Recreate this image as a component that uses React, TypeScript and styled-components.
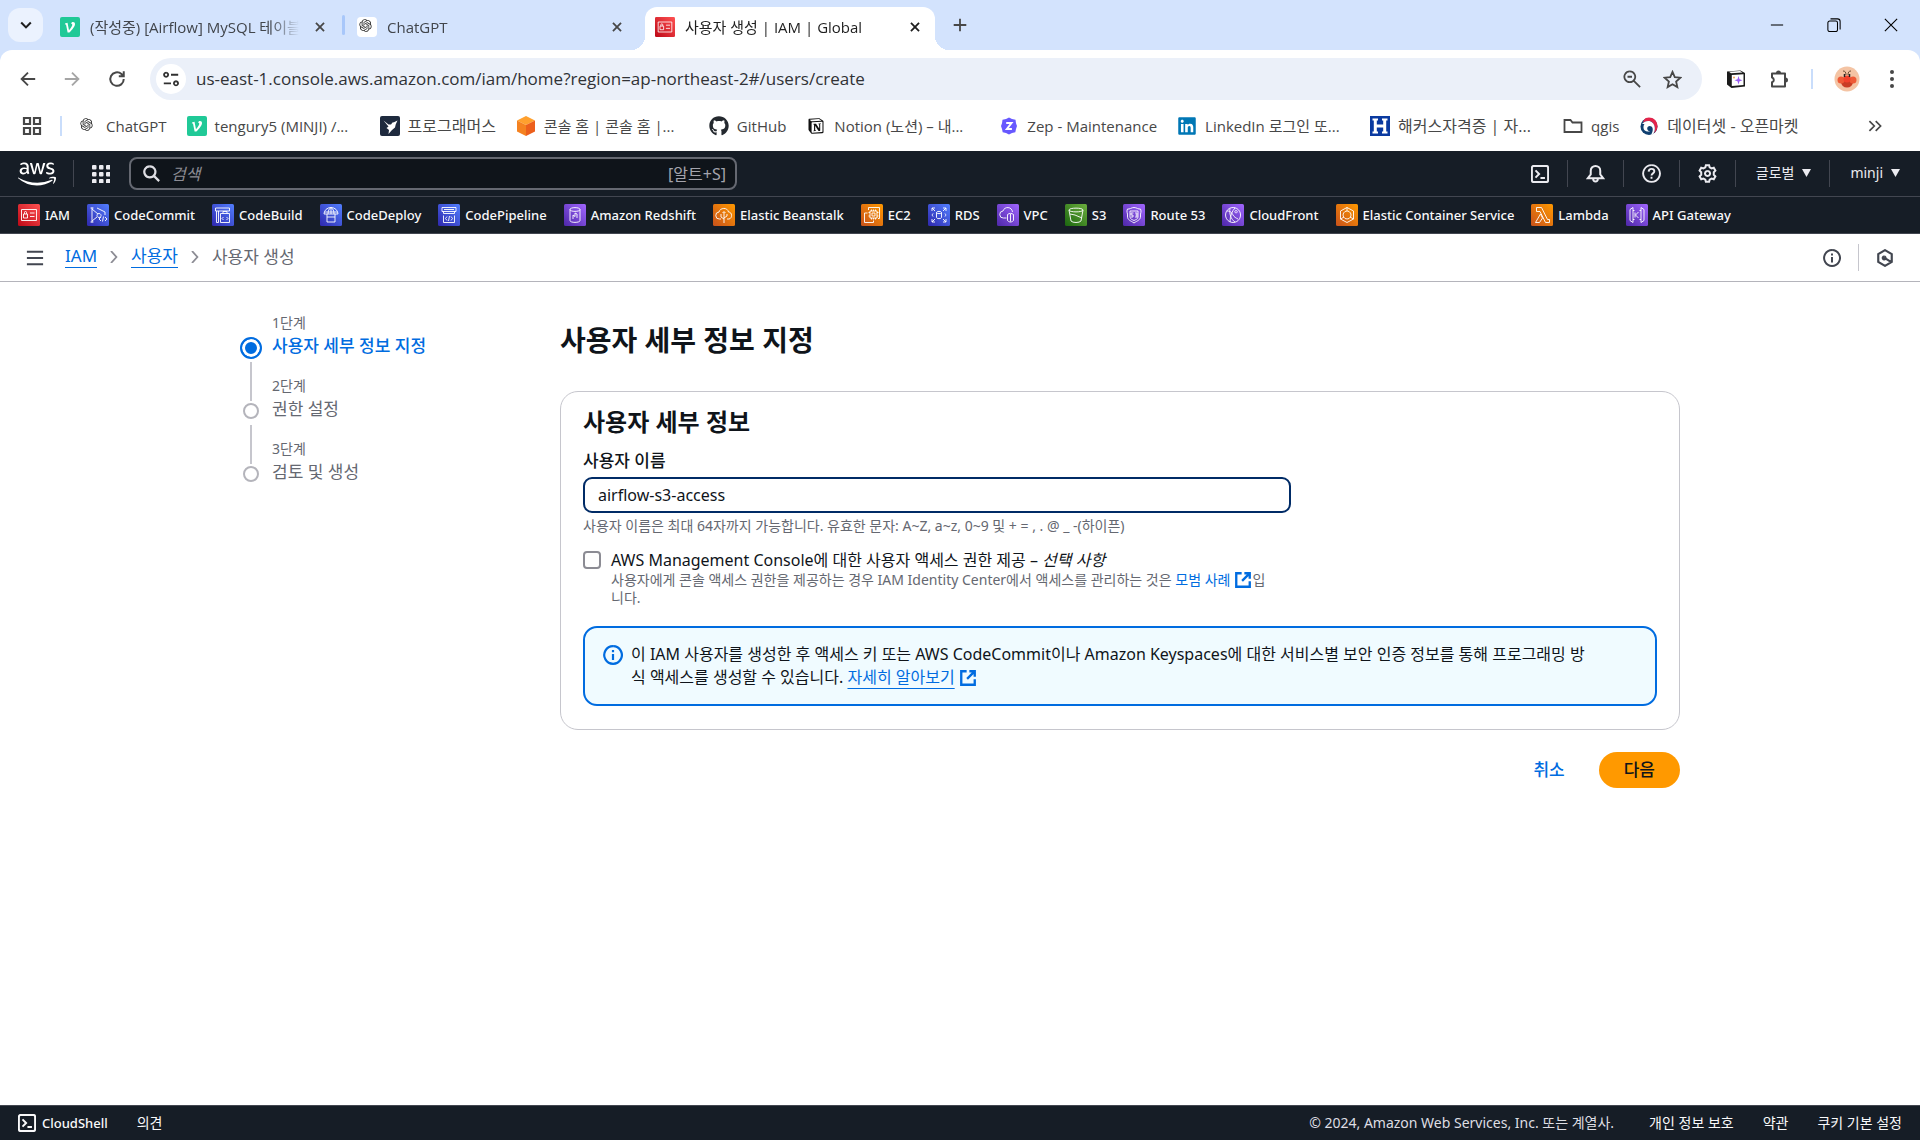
import React from "react";
import styled, { createGlobalStyle, css } from "styled-components";
import { FaAws, FaGithub, FaLinkedin } from "react-icons/fa";
import { RiOpenaiFill, RiNotionFill } from "react-icons/ri";

const ui = `"Open Sans", "Noto Sans CJK KR", sans-serif`;
const ember = `"Noto Sans", "Noto Sans CJK KR", sans-serif`;

const GlobalStyle = createGlobalStyle`
  * { box-sizing: border-box; }
  body { margin: 0; background: #fff; font-family: ${ember}; color: #0f141a; }
  button { border: 0; padding: 0; background: none; font: inherit; color: inherit; cursor: pointer; }
  button, a { display: inline-flex; align-items: center; }
  svg { display: block; flex: none; }
  h1, h2, p, ol, ul { margin: 0; padding: 0; }
  ol, ul { list-style: none; }
`;

const Page = styled.div`
  min-height: 100vh;
  display: flex;
  flex-direction: column;
`;

/* ---------- browser window ---------- */

const TabStrip = styled.div`
  height: 50px;
  display: flex;
  align-items: flex-end;
  background: #d3e3fd;
  font: 15px/20px ${ui};
`;
const TabSearch = styled.button`
  width: 35px;
  height: 34px;
  margin: 0 4px 8px 8px;
  justify-content: center;
  border-radius: 12px;
  background: #ebf2fe;
`;
const Tab = styled.div<{ $active?: boolean }>`
  position: relative;
  display: flex;
  align-items: center;
  width: 297px;
  height: 43px;
  padding: 0 15px 4px 13px;
  color: ${(p) => (p.$active ? "#1f1f1f" : "#41454b")};
  ${(p) =>
    p.$active &&
    css`
      width: 290px;
      margin-left: 4px;
      padding: 0 11px 4px 10px;
      background: #fff;
      border-radius: 12px 12px 0 0;
      &::before,
      &::after {
        content: "";
        position: absolute;
        bottom: 0;
        width: 14px;
        height: 14px;
      }
      &::before {
        left: -14px;
        background: radial-gradient(circle at 0 0, transparent 14px, #fff 14px);
      }
      &::after {
        right: -14px;
        background: radial-gradient(circle at 100% 0, transparent 14px, #fff 14px);
      }
    `}
`;
const TabTitle = styled.span`
  flex: 1;
  margin: 0 12px 0 10px;
  overflow: hidden;
  white-space: nowrap;
  mask-image: linear-gradient(90deg, #000 86%, transparent);
`;
const TabDivider = styled.span`
  width: 3px;
  height: 20px;
  margin: 0 -1px 15px -2px;
  border-radius: 2px;
  background: #a8c7fa;
`;
const NewTab = styled.button`
  margin: 0 auto 16px 16px;
`;
const WindowControls = styled.div`
  display: flex;
  align-items: center;
  gap: 43px;
  margin: 0 22px 18px 0;
`;

const BrowserBar = styled.div`
  background: #d3e3fd;
`;
const Toolbar = styled.div`
  height: 58px;
  display: flex;
  align-items: center;
  padding: 0 17px 0 20px;
  border-radius: 12px 12px 0 0;
  background: #fff;
  color: #474747;
`;
const NavButtons = styled.div`
  display: flex;
  gap: 28px;
  margin-right: 24px;
`;
const Omnibox = styled.div`
  flex: 1;
  height: 42px;
  display: flex;
  align-items: center;
  gap: 22px;
  padding: 0 20px 0 6px;
  border-radius: 21px;
  background: #ebf0f9;
`;
const SiteInfo = styled.button`
  width: 30px;
  height: 30px;
  justify-content: center;
  border-radius: 15px;
  background: #fff;
`;
const UrlInput = styled.input`
  flex: 1;
  min-width: 0;
  margin-left: -12px;
  padding: 0;
  border: 0;
  outline: 0;
  background: none;
  font: 17px/24px ${ui};
  color: #303236;
`;
const Extensions = styled.div`
  display: flex;
  align-items: center;
  gap: 21px;
  margin-left: 23px;
`;
const Divider = styled.span<{ $inset?: boolean }>`
  width: 2px;
  height: 20px;
  margin-left: ${(p) => (p.$inset ? "18px" : "0")};
  background: #c9ddfb;
`;

const Bookmarks = styled.nav`
  height: 43px;
  display: flex;
  align-items: center;
  padding: 0 38px 8px 22px;
  color: #474747;
  font: 15px/20px ${ui};
`;
const BookmarkList = styled.div`
  flex: 1;
  display: flex;
  gap: 20px;
  margin-left: 16px;
`;
const Bookmark = styled.a`
  gap: 8px;
  color: inherit;
  text-decoration: none;
  white-space: nowrap;
`;
const BookmarkLabel = styled.span<{ $clipped?: boolean; $hangul?: boolean }>`
  width: ${(p) => (p.$clipped ? "145px" : "auto")};
  font-size: ${(p) => (p.$hangul ? 16 : 15)}px;
`;

/* ---------- AWS header ---------- */

const ConsoleHeader = styled.header`
  height: 46px;
  display: flex;
  align-items: center;
  padding: 0 20px 0 18px;
  background: #161d26;
  border-bottom: 1px solid #424650;
  color: #ebebf0;
  font-size: 14px;
`;
const Rule = styled.span<{ $light?: boolean }>`
  width: 1px;
  height: 27px;
  background: ${(p) => (p.$light ? "#c6c6cd" : "#424650")};
`;
const LogoLink = styled.a`
  margin-right: 17px;
  color: #fff;
`;
const AppsButton = styled.button`
  margin: 0 19px 0 18px;
`;
const SearchBox = styled.label`
  width: 608px;
  height: 33px;
  display: flex;
  align-items: center;
  gap: 11px;
  padding: 0 9px 0 12px;
  border: 2px solid #656871;
  border-radius: 8px;
  background: #0f141a;
  color: #a4a4ad;
  font-size: 16px;
  line-height: 22px;
`;
const SearchInput = styled.input`
  flex: 1;
  min-width: 0;
  padding: 0;
  border: 0;
  outline: 0;
  background: none;
  color: #fff;
  font: 16px/22px ${ember};
  &::placeholder {
    color: #8c8c94;
    font-style: italic;
    opacity: 1;
  }
`;
const HeaderTools = styled.div`
  display: flex;
  align-items: center;
  gap: 18px;
  margin-left: auto;
`;
const MenuButton = styled.button`
  gap: 8px;
  margin-left: 2px;
  padding-bottom: 2px;
  line-height: 20px;
`;

const Favorites = styled.nav`
  height: 37px;
  display: flex;
  align-items: center;
  gap: 17px;
  padding: 0 18px;
  background: #161d26;
  border-bottom: 1px solid #424650;
  font-size: 13px;
  font-weight: 500;
  line-height: 20px;
`;
const Favorite = styled.a`
  gap: 5px;
  color: #f9f9fa;
  text-decoration: none;
  white-space: nowrap;
`;

const BreadcrumbBar = styled.div`
  height: 48px;
  display: flex;
  align-items: center;
  padding: 0 26px;
  border-bottom: 1px solid #b4b4bb;
  color: #424650;
  font-size: 17px;
  line-height: 22px;
`;
const Crumbs = styled.nav`
  flex: 1;
  display: flex;
  align-items: center;
  gap: 11px;
  margin-left: 21px;
  padding-bottom: 2px;
  color: #656871;
`;
const CrumbLink = styled.a`
  color: #006ce0;
  text-decoration: none;
  border-bottom: 1px solid #006ce0;
`;
const PanelTools = styled.div`
  display: flex;
  align-items: center;
  gap: 17px;
`;

/* ---------- wizard ---------- */

const Main = styled.main`
  flex: 1;
  width: 100%;
  max-width: 1440px;
  margin: 0 auto;
  padding: 32px 0;
  display: grid;
  grid-template-columns: 320px 1fr;
`;
const Step = styled.li`
  display: flex;
  gap: 10px;
  min-height: 63px;
`;
const StepRail = styled.div`
  width: 22px;
  display: flex;
  flex-direction: column;
  align-items: center;
  margin-bottom: -26px;
  padding-top: 22px;
`;
const StepDot = styled.span<{ $active?: boolean }>`
  flex: none;
  width: ${(p) => (p.$active ? 22 : 16)}px;
  height: ${(p) => (p.$active ? 22 : 16)}px;
  margin: ${(p) => (p.$active ? 1 : 4)}px 0;
  border: 2px solid ${(p) => (p.$active ? "#006ce0" : "#b4b4bb")};
  border-radius: 50%;
  background: ${(p) => (p.$active ? "#006ce0" : "#fff")};
  box-shadow: inset 0 0 0 3px #fff;
`;
const StepLine = styled.span`
  flex: 1;
  width: 2px;
  margin: 2px 0;
  background: #c6c6cd;
`;
const StepNumber = styled.div`
  color: #656871;
  font-size: 14px;
  line-height: 18px;
`;
const StepName = styled.div<{ $active?: boolean }>`
  margin-top: 2px;
  color: ${(p) => (p.$active ? "#006ce0" : "#656871")};
  font-size: 17px;
  font-weight: ${(p) => (p.$active ? 500 : 400)};
  line-height: 23px;
`;

const Title = styled.h1`
  margin: 8px 0 33px;
  font-size: 28px;
  line-height: 36px;
`;
const Panel = styled.section`
  padding: 16px 22px 23px;
  border: 1px solid #c6c6cd;
  border-radius: 18px;
`;
const PanelTitle = styled.h2`
  font-size: 24px;
  line-height: 28px;
`;
const FieldColumn = styled.div`
  max-width: 708px;
`;
const FieldLabel = styled.label`
  display: block;
  margin-top: 13px;
  font-size: 17px;
  font-weight: 500;
  line-height: 23px;
`;
const TextField = styled.input`
  display: block;
  width: 100%;
  height: 36px;
  margin: 5px 0 4px;
  padding: 0 13px;
  border: 2px solid #002b66;
  border-radius: 9px;
  outline: 0;
  font: 16px/22px ${ember};
  color: #0f141a;
`;
const Hint = styled.p`
  color: #656871;
  font-size: 14px;
  line-height: 18px;
`;
const CheckRow = styled.div`
  display: grid;
  grid-template-columns: 18px 1fr;
  column-gap: 10px;
  margin-top: 14px;
`;
const Checkbox = styled.input`
  appearance: none;
  width: 18px;
  height: 18px;
  margin: 2px 0 0;
  border: 2px solid #8c8c94;
  border-radius: 4px;
`;
const CheckLabel = styled.label`
  font-size: 16px;
  line-height: 22px;
`;
const CheckHint = styled(Hint)`
  grid-column: 2;
  padding-right: 24px;
`;
const TextLink = styled.a`
  display: inline;
  color: #006ce0;
  text-decoration: none;
  svg {
    display: inline-block;
    vertical-align: top;
    margin-left: 4px;
  }
`;
const NoticeLink = styled(TextLink)`
  text-decoration: underline;
  text-decoration-thickness: 1px;
  text-underline-offset: 5px;
  svg {
    margin-top: 3px;
  }
`;
const Notice = styled.div`
  display: flex;
  gap: 8px;
  margin-top: 19px;
  padding: 15px 58px 15px 18px;
  border: 2px solid #006ce0;
  border-radius: 14px;
  background: #f0fbff;
  color: #006ce0;
`;
const NoticeIcon = styled.span`
  padding-top: 2px;
`;
const NoticeText = styled.p`
  color: #0f141a;
  font-size: 16px;
  line-height: 23px;
`;
const Actions = styled.div`
  display: flex;
  justify-content: flex-end;
  align-items: center;
  gap: 9px;
  margin-top: 22px;
  font-size: 17px;
  font-weight: 500;
  line-height: 22px;
`;
const Action = styled.button<{ $primary?: boolean }>`
  height: 36px;
  padding: 0 25px;
  border-radius: 18px;
  color: ${(p) => (p.$primary ? "#0f141a" : "#006ce0")};
  background: ${(p) => (p.$primary ? "#ff9900" : "transparent")};
`;

const Footer = styled.footer`
  height: 35px;
  display: flex;
  align-items: center;
  gap: 29px;
  padding: 0 18px 1px;
  border-top: 1px solid #424650;
  background: #161d26;
  color: #f9f9fa;
  font-size: 14px;
  line-height: 20px;
`;
const FooterButton = styled.button`
  gap: 6px;
  font-size: 13px;
  font-weight: 500;
`;
const Copyright = styled.span`
  margin-left: auto;
  margin-right: 6px;
  color: #dedee3;
`;
const FooterLink = styled.a`
  color: inherit;
  text-decoration: none;
`;

/* ---------- icons ---------- */

type LineProps = { d: string; size?: number; w?: number; color?: string; box?: number };
const Line = ({ d, size = 20, w = 2, color = "currentColor", box = 20 }: LineProps) => (
  <svg width={size} height={size} viewBox={`0 0 ${box} ${box}`} fill="none" stroke={color} strokeWidth={w} aria-hidden>
    <path d={d} />
  </svg>
);

const closeD = "M5.5 5.5l9 9M14.5 5.5l-9 9";
const shellD = "M3 1h14a2 2 0 0 1 2 2v14a2 2 0 0 1-2 2H3a2 2 0 0 1-2-2V3a2 2 0 0 1 2-2zM5 6l4 4-4 4M10.500 14.500h5";

const Velog = () => (
  <svg width="20" height="20" viewBox="0 0 20 20" aria-hidden>
    <rect width="20" height="20" rx="2" fill="#20c997" />
    <path d="M5 6.500l2.500-.8 1.500 7.500c2.500-2.800 3.600-5 3.200-6-.2-.5-.8-.6-1.200-.8.3-.9 1-1.500 2-1.500 1.300 0 2 .8 2 2 0 2.300-2.700 5.700-5.600 8.600H7.600L6 7.400l-1.100.2z" fill="#fff" />
  </svg>
);
const Gpt = ({ boxed }: { boxed?: boolean }) => (
  <svg width="20" height="20" viewBox="0 0 20 20" aria-hidden>
    {boxed && <rect width="20" height="20" rx="4" fill="#fff" />}
    <RiOpenaiFill x="1" y="1" width="18" height="18" color="#2b2b2b" />
  </svg>
);
const Programmers = () => (
  <svg width="20" height="20" viewBox="0 0 20 20" aria-hidden>
    <rect width="20" height="20" rx="2" fill="#1e2a3e" />
    <path d="M3.500 4.500l5 4 2.500 0 1.500-2 1.500-.2 3.500-1.800-1.800 4-.7 3-3 2.500-3.500 4 .5-4-2.500-2 2-1.500z" fill="#fff" />
  </svg>
);
const Cube = () => (
  <svg width="20" height="20" viewBox="0 0 20 20" aria-hidden>
    <path d="M10 0l9 4.500-9 4.500-9-4.500z" fill="#ffa02e" />
    <path d="M1 4.500L10 9v11l-9-4.500z" fill="#f58220" />
    <path d="M19 4.500L10 9v11l9-4.500z" fill="#ec5f1c" />
  </svg>
);
const Zep = () => (
  <svg width="20" height="20" viewBox="0 0 20 20" aria-hidden>
    <path d="M10 1.500l3 1.500 3.500.8.5 3.400 1 2.800-1 3-.7 3.200-3.300.8-3 1.500-3-1.500-3.300-.8L3 13l-1-3 1-2.800.5-3.400L7 3z" fill="#6758ff" />
    <path d="M7.200 7h5.300l-4.600 6h5" fill="none" stroke="#fff" strokeWidth="2" />
  </svg>
);
const Hackers = () => (
  <svg width="20" height="20" viewBox="0 0 20 20" aria-hidden>
    <rect width="20" height="20" fill="#0a3aa0" />
    <path d="M2.500 3.500h5.500M12 3.500h5.500M2.500 16.500h5.500M12 16.500h5.500" stroke="#fff" strokeWidth="2" />
    <path d="M5.300 3v14M14.700 3v14M5 10h10" stroke="#fff" strokeWidth="3" />
  </svg>
);
const Taegeuk = () => (
  <svg width="20" height="20" viewBox="0 0 20 20" aria-hidden>
    <circle cx="10" cy="10.500" r="8.500" fill="#0f3f70" />
    <path d="M7 2c5-2 11.500 1.500 11.500 8 0 3-1.500 5.500-3.500 7 1.500-4 1-8-1.500-10.500C11.500 4.500 8 4.500 4 6.500 4.500 4.500 5.500 2.800 7 2z" fill="#e4244a" />
    <path d="M3 8c3-3.500 8-3.800 10.500-1.300 2.800 2.800 3 7 1 10.800-.8.800-1.500 1.200-2.500 1.500 2-3.500 2.500-7 .5-8.500-2-1.300-4.300-.2-4.300 2 0 1.800 1.300 2.800 3 2.500-3 1.500-6.500 0-6.700-3C4.400 10 4.800 8.800 5.500 8z" fill="#fff" />
  </svg>
);
const Folder = () => <Line d="M1.500 16V4h6l2 2.500h9V16z" w={1.8} />;

const ServiceIcon = ({ from, to, d, size = 22 }: { from: string; to: string; d: string; size?: number }) => {
  const id = `g${from.slice(1)}${to.slice(1)}`;
  return (
    <svg width={size} height={size} viewBox="0 0 22 22" aria-hidden>
      <defs>
        <linearGradient id={id} x1="0" y1="1" x2="1" y2="0">
          <stop offset="0" stopColor={from} />
          <stop offset="1" stopColor={to} />
        </linearGradient>
      </defs>
      <rect width="22" height="22" rx="1.500" fill={`url(#${id})`} />
      <path d={d} fill="none" stroke="#fff" strokeWidth="1" strokeOpacity="0.9" />
    </svg>
  );
};

const glyphs = {
  iam: "M3.500 5.500h15v11h-15zM5.500 10h4v4h-4zM6.500 10V8.500a1 1 0 0 1 2 0V10M12 9h4.500M12 12.500h4.500",
  commit: "M5 3.500v15M5 5l6 5M5 17l5-4M3.500 4h3M3.500 18h3M10 4l8 4v3M12 9.500a2 2 0 1 0 .1 0M14 13l-2 2 2 2M18 13l2 2-2 2M16.500 12.500l-1 5",
  build: "M3.500 4h14v3h-14zM4.500 7v11.500h2V7M8.500 9.500v9h9v-9zM11 9.500V7.500h4v2M11.500 13l-1.500 1.500 1.500 1.500M14.500 13l1.500 1.500-1.500 1.500",
  deploy: "M4 10a7 6.500 0 0 1 14 0zM11 3.500V10M8 10c0-3 1-5.500 3-6.500 2 1 3 3.500 3 6.500M4.500 8h13M7 10v3M15 10v3M7 13h8v5H7z",
  pipeline: "M4 3.500h14v4H4zM5.500 7.500v2h11v-2M5.500 11.500v7h11v-7M9 12.500l-1.500 2L9 16.500M13 12.500l1.500 2-1.500 2M11.500 12l-1 5M6 5.500h10",
  redshift: "M6 5.500c0-2.500 10-2.500 10 0v11c0 2.500-10 2.500-10 0zM6 5.500c0 2.500 10 2.500 10 0M9 15v-4l2 1.500V9l2 1v4",
  beanstalk: "M8 15H6.500A3.500 3.500 0 0 1 6 8c1-4.500 8.500-5 9.500 0 4 0 4 6.500.5 7h-2M11 19V8M11 15l-3-2v-3M11 14l3-2v-2M9.500 9L11 7.500 12.500 9",
  ec2: "M9 7h7v7H9zM11 9h3v3h-3zM10.500 5.500V7M12.500 5.500V7M14.500 5.500V7M10.500 14v1.500M12.500 14v1.500M14.500 14v1.500M7.500 8.500H9M7.500 12H9M16 8.500h1.500M16 12h1.500M7.500 6V3.500h11v11H17M6.500 9H3.500v9.500h9v-2",
  rds: "M8.500 8.500c0-1.500 5-1.500 5 0v5c0 1.500-5 1.500-5 0zM8.500 8.500c0 1.500 5 1.500 5 0M4 7V4h3M4 4l3 3M15 4h3v3M18 4l-3 3M4 15v3h3M4 18l3-3M15 18h3v-3M18 18l-3-3M5 9.500c-1 1-1 2 0 3M17 9.500c1 1 1 2 0 3",
  vpc: "M9.500 14H6.500A3.500 3.500 0 0 1 6 7c1.500-5 9-4.500 9.500 1M10.500 10.500c2-1.500 4-1.500 6 0v6c-2 2-4 2-6 0zM13.500 10v7.500",
  s3: "M4 6c0-2.500 14-2.500 14 0 0 2.500-14 2.500-14 0l2 11c1.500 2 8.500 2 10 0l2-11M10 11l7 3M5 10l5 1",
  route: "M4.500 5c2 .5 4-1.500 6.500-1.500S15.500 5.500 17.500 5c1.500 3-.5 4 0 7 .3 4-3 4.500-6.500 7-3.500-2.500-6.800-3-6.500-7 .5-3-1.500-4 0-7zM7 7h8v6c0 2-2 2.500-4 3.500-2-1-4-1.500-4-3.500zM8 9h2.500M8 9v2h2v2H8M12 9h2v4h-2M12.500 11H14",
  front: "M11 3.500a7.500 7.500 0 1 0 .1 0M5 7c4 0 5 2 6 4s3 3 5 4M8 4.500c-1 5 1 11 5 13.500M13 4c-3 3-5 8-5 14M14 6.500a1.200 1.200 0 1 0 .1 0",
  ecs: "M11 3.500l6.500 3.500v8L11 18.500 4.500 15V7zM11 7a4 4 0 1 0 .1 0M11 3.500V7M4.500 15L8 13M17.500 15L14 13",
  lambda: "M5.500 3.500h5l6 12h2v3h-4L9 7.500H5.500zM9.500 10L4.500 18.500h4L11.500 14z",
  gateway: "M4 5.500l3-2v15l-3-2zM18 5.500l-3-2v15l3-2zM12.500 8l-3 3 3 3M9 8.500v5M7 6.500h1.500M13.500 6.500H15M7 15.500h1.500M13.500 15.500H15",
};

const red = { from: "#bd0816", to: "#ff5252" };
const blue = { from: "#2e27ad", to: "#527fff" };
const purple = { from: "#4d27a8", to: "#a166ff" };
const orange = { from: "#c8511b", to: "#ff9900" };
const green = { from: "#1b660f", to: "#6cae3e" };

const favorites = [
  { name: "IAM", ...red, d: glyphs.iam },
  { name: "CodeCommit", ...blue, d: glyphs.commit },
  { name: "CodeBuild", ...blue, d: glyphs.build },
  { name: "CodeDeploy", ...blue, d: glyphs.deploy },
  { name: "CodePipeline", ...blue, d: glyphs.pipeline },
  { name: "Amazon Redshift", ...purple, d: glyphs.redshift },
  { name: "Elastic Beanstalk", ...orange, d: glyphs.beanstalk },
  { name: "EC2", ...orange, d: glyphs.ec2 },
  { name: "RDS", ...blue, d: glyphs.rds },
  { name: "VPC", ...purple, d: glyphs.vpc },
  { name: "S3", ...green, d: glyphs.s3 },
  { name: "Route 53", ...purple, d: glyphs.route },
  { name: "CloudFront", ...purple, d: glyphs.front },
  { name: "Elastic Container Service", ...orange, d: glyphs.ecs },
  { name: "Lambda", ...orange, d: glyphs.lambda },
  { name: "API Gateway", ...purple, d: glyphs.gateway },
];

const bookmarks: { name: string; icon: React.ReactNode; clipped?: boolean; hangul?: boolean }[] = [
  { name: "ChatGPT", icon: <Gpt /> },
  { name: "tengury5 (MINJI) /...", icon: <Velog />, clipped: true },
  { name: "프로그래머스", icon: <Programmers />, hangul: true },
  { name: "콘솔 홈 | 콘솔 홈 |...", icon: <Cube />, clipped: true },
  { name: "GitHub", icon: <FaGithub size={20} color="#24292f" /> },
  { name: "Notion (노션) – 내...", icon: <RiNotionFill size={20} color="#111" />, clipped: true },
  { name: "Zep - Maintenance", icon: <Zep /> },
  { name: "LinkedIn 로그인 또...", icon: <FaLinkedin size={20} color="#0077b5" />, clipped: true },
  { name: "해커스자격증 | 자...", icon: <Hackers />, clipped: true, hangul: true },
  { name: "qgis", icon: <Folder /> },
  { name: "데이터셋 - 오픈마켓", icon: <Taegeuk />, hangul: true },
];

const steps = ["사용자 세부 정보 지정", "권한 설정", "검토 및 생성"];

const Caret = () => (
  <svg width="9" height="9" viewBox="0 0 9 9" aria-hidden>
    <path d="M0 1h9L4.500 9z" fill="currentColor" />
  </svg>
);
const External = () => (
  <Line size={18} w={2.6} d="M8.500 2.500h-6v15h15v-6M11.500 2.500h6v6M17 3l-8 8" />
);

const Browser = () => (
  <>
    <TabStrip>
      <TabSearch aria-label="탭 검색">
        <Line size={16} w={2.6} color="#1f1f1f" d="M4 7l6 6 6-6" />
      </TabSearch>
      <Tab>
        <Velog />
        <TabTitle>(작성중) [Airflow] MySQL 테이블</TabTitle>
        <button aria-label="닫기"><Line d={closeD} size={18} color="#474747" /></button>
      </Tab>
      <TabDivider />
      <Tab>
        <Gpt boxed />
        <TabTitle>ChatGPT</TabTitle>
        <button aria-label="닫기"><Line d={closeD} size={18} color="#474747" /></button>
      </Tab>
      <Tab $active>
        <ServiceIcon {...red} d={glyphs.iam} size={20} />
        <TabTitle>사용자 생성 | IAM | Global</TabTitle>
        <button aria-label="닫기"><Line d={closeD} size={18} color="#1f1f1f" /></button>
      </Tab>
      <NewTab aria-label="새 탭"><Line d="M10 3v14M3 10h14" size={18} color="#474747" /></NewTab>
      <WindowControls>
        <button aria-label="최소화"><Line d="M1 8h14" size={14} box={16} w={1.2} color="#000" /></button>
        <button aria-label="이전 크기로"><Line d="M3 3.500h7a2 2 0 0 1 2 2v8a2 2 0 0 1-2 2H3a2 2 0 0 1-2-2v-8a2 2 0 0 1 2-2zM4 1h8a3 3 0 0 1 3 3v9" size={14} box={16} w={1.2} color="#000" /></button>
        <button aria-label="창 닫기"><Line d="M1 1l14 14M15 1L1 15" size={14} box={16} w={1.3} color="#000" /></button>
      </WindowControls>
    </TabStrip>
    <BrowserBar>
      <Toolbar>
        <NavButtons>
          <button aria-label="뒤로"><Line size={16} d="M19 10H2M10 2l-8 8 8 8" w={2.3} /></button>
          <button aria-label="앞으로"><Line size={16} d="M1 10h17M10 2l8 8-8 8" w={2.3} color="#a5a5a5" /></button>
          <button aria-label="새로고침"><Line size={18} d="M17.500 10A7.500 7.500 0 1 1 15 4.500l2 2M17.500 1.500v5.500H12" w={2.2} /></button>
        </NavButtons>
        <Omnibox>
          <SiteInfo aria-label="사이트 정보 보기">
            <Line size={18} w={2} color="#303030" d="M4.500 3a2.300 2.300 0 1 0 .1 0M10 5.300h8M15.500 12.500a2.300 2.300 0 1 0 .1 0M2 14.800h8" />
          </SiteInfo>
          <UrlInput aria-label="주소창" defaultValue="us-east-1.console.aws.amazon.com/iam/home?region=ap-northeast-2#/users/create" />
          <button aria-label="축소"><Line size={18} w={2} d="M7.500 1.500a6 6 0 1 0 .1 0M12 12l7 7M5 7.500h5" /></button>
          <button aria-label="북마크"><Line size={19} w={1.9} d="M10 2l2.400 5.500 5.900.6-4.500 4 1.300 5.900L10 15l-5.100 3 1.300-5.900-4.500-4 5.900-.6z" /></button>
        </Omnibox>
        <Extensions>
          <button aria-label="Notion Web Clipper">
            <svg width="22" height="22" viewBox="0 0 22 22" aria-hidden>
              <path d="M2 3.500L15.500 2.500 20 5v13.500L6.500 20 2 16.500z" fill="#1b1b1b" />
              <path d="M6.800 7L18.500 6.200V17L6.800 18z" fill="#fff" />
              <path d="M4 3.800l11-.8 2.500 1.500L6 5.300z" fill="#fff" />
              <path d="M13.500 8l1 3.200 3 1-3 1-1 3.200-1-3.200-3-1 3-1z" fill="#9a5cf5" />
              <circle cx="9" cy="9.500" r="1" fill="#f5a15c" />
            </svg>
          </button>
          <button aria-label="확장 프로그램">
            <svg width="22" height="22" viewBox="0 0 22 22" aria-hidden>
              <path d="M4 5.500h13v13H4v-4.200a2.500 2.500 0 0 0 0-4.800z" fill="none" stroke="#474747" strokeWidth="2" strokeLinejoin="round" />
              <path d="M8 5a2.500 2.500 0 0 1 5 0zM17.500 9.500a2.500 2.500 0 0 1 0 5z" fill="#474747" />
            </svg>
          </button>
          <Divider />
          <button aria-label="프로필">
            <svg width="26" height="26" viewBox="0 0 26 26" aria-hidden>
              <circle cx="13" cy="13" r="12.500" fill="#f4c4a4" />
              <path d="M9 5c2 0 3 1 3 4M17 5c-2 0-3 1-3 4" fill="none" stroke="#6b4a2f" />
              <ellipse cx="13" cy="16" rx="6" ry="5.500" fill="#c93d24" />
              <circle cx="7" cy="14" r="3.500" fill="#ee5a36" />
              <circle cx="19" cy="14" r="3.500" fill="#ee5a36" />
              <circle cx="13" cy="13" r="3.500" fill="#f2412c" />
              <path d="M10.500 8v3M15.500 8v3" stroke="#222" strokeWidth="1.500" />
            </svg>
          </button>
          <button aria-label="메뉴">
            <svg width="22" height="20" viewBox="0 0 22 20" fill="#474747" aria-hidden>
              <circle cx="11" cy="3" r="2" /><circle cx="11" cy="10" r="2" /><circle cx="11" cy="17" r="2" />
            </svg>
          </button>
        </Extensions>
      </Toolbar>
    </BrowserBar>
    <Bookmarks aria-label="북마크바">
      <button aria-label="앱"><Line d="M2 2h6v6H2zM12 2h6v6h-6zM2 12h6v6H2zM12 12h6v6h-6z" w={2.2} /></button>
      <Divider $inset />
      <BookmarkList>
        {bookmarks.map((b) => (
          <Bookmark key={b.name} href="#">
            {b.icon}
            <BookmarkLabel $clipped={b.clipped} $hangul={b.hangul}>{b.name}</BookmarkLabel>
          </Bookmark>
        ))}
      </BookmarkList>
      <button aria-label="북마크 더보기"><Line size={14} w={2.4} d="M2 3l7 7-7 7M11 3l7 7-7 7" /></button>
    </Bookmarks>
  </>
);

export default function App() {
  return (
    <Page>
      <GlobalStyle />
      <Browser />
      <ConsoleHeader>
        <LogoLink href="#" aria-label="AWS"><FaAws size={38} /></LogoLink>
        <Rule />
        <AppsButton aria-label="서비스">
          <svg width="18" height="18" viewBox="0 0 18 18" fill="currentColor" aria-hidden>
            {[0, 7, 14].map((y) => [0, 7, 14].map((x) => <rect key={`${x}-${y}`} x={x} y={y} width="4.500" height="4.500" rx="1" />))}
          </svg>
        </AppsButton>
        <SearchBox>
          <Line size={17} w={2.6} color="#dedee3" d="M8 1.500a6.500 6.500 0 1 0 .1 0M12.500 12.500l6.500 6.500" />
          <SearchInput aria-label="검색" placeholder="검색" />
          [알트+S]
        </SearchBox>
        <HeaderTools>
          <button aria-label="CloudShell"><Line d={shellD} size={18} w={2.2} /></button>
          <Rule />
          <button aria-label="알림"><Line size={19} w={2.1} d="M10 2a5 5 0 0 1 5 5v4l3 4H2l3-4V7a5 5 0 0 1 5-5zM7.500 15.500c.2 4 4.800 4 5 0" /></button>
          <Rule />
          <button aria-label="지원"><Line size={19} w={2} d="M10 1.200a8.800 8.800 0 1 0 .1 0M7 8c.2-4 6-3.600 6-.3 0 2.300-3 2-3 4.500M10 13.500v2" /></button>
          <Rule />
          <button aria-label="설정"><Line size={19} w={2.1} d="M8.300 1.200h3.400l.6 2.400 2 1.100 2.300-.7 1.700 3-1.700 1.700v2.600l1.700 1.700-1.700 3-2.300-.7-2 1.100-.6 2.400H8.300l-.6-2.400-2-1.100-2.300.7-1.700-3 1.700-1.700V8.700L1.700 7l1.700-3 2.300.7 2-1.100zM10 7.300a2.700 2.700 0 1 0 .1 0" /></button>
          <Rule />
          <MenuButton>글로벌 <Caret /></MenuButton>
          <Rule />
          <MenuButton>minji <Caret /></MenuButton>
        </HeaderTools>
      </ConsoleHeader>
      <Favorites aria-label="즐겨찾기">
        {favorites.map((f) => (
          <Favorite key={f.name} href="#">
            <ServiceIcon from={f.from} to={f.to} d={f.d} />
            {f.name}
          </Favorite>
        ))}
      </Favorites>
      <BreadcrumbBar>
        <button aria-label="탐색 열기"><Line size={18} w={2.2} d="M1 3h18M1 10h18M1 17h18" /></button>
        <Crumbs aria-label="이동 경로">
          <CrumbLink href="#">IAM</CrumbLink>
          <Line size={12} w={3} color="#8c8c94" d="M5 0l9 10-9 10" />
          <CrumbLink href="#">사용자</CrumbLink>
          <Line size={12} w={3} color="#8c8c94" d="M5 0l9 10-9 10" />
          <span>사용자 생성</span>
        </Crumbs>
        <PanelTools>
          <button aria-label="정보"><Line size={18} w={2.2} d="M10 1.200a8.800 8.800 0 1 0 .1 0M10 9v6M10 5v2.200" /></button>
          <Rule $light />
          <button aria-label="Amazon Q"><Line size={18} w={2.4} d="M10 1.300l7.500 4.300v8.800L10 18.700l-7.500-4.300V5.600zM9 9.500l8 5M9 8.500a1.500 1.500 0 1 0 .1 0" /></button>
        </PanelTools>
      </BreadcrumbBar>

      <Main>
        <ol>
          {steps.map((name, i) => (
            <Step key={name}>
              <StepRail>
                <StepDot $active={i === 0} />
                {i < steps.length - 1 && <StepLine />}
              </StepRail>
              <div>
                <StepNumber>{i + 1}단계</StepNumber>
                <StepName $active={i === 0}>{name}</StepName>
              </div>
            </Step>
          ))}
        </ol>
        <div>
          <Title>사용자 세부 정보 지정</Title>
          <Panel>
            <PanelTitle>사용자 세부 정보</PanelTitle>
            <FieldColumn>
              <FieldLabel htmlFor="user-name">사용자 이름</FieldLabel>
              <TextField id="user-name" defaultValue="airflow-s3-access" />
              <Hint>사용자 이름은 최대 64자까지 가능합니다. 유효한 문자: A~Z, a~z, 0~9 및 + = , . @ _ -(하이픈)</Hint>
              <CheckRow>
                <Checkbox id="console-access" type="checkbox" />
                <CheckLabel htmlFor="console-access">
                  AWS Management Console에 대한 사용자 액세스 권한 제공 – <em>선택 사항</em>
                </CheckLabel>
                <CheckHint>
                  사용자에게 콘솔 액세스 권한을 제공하는 경우 IAM Identity Center에서 액세스를 관리하는 것은{" "}
                  <TextLink href="#">모범 사례<External /></TextLink>입니다.
                </CheckHint>
              </CheckRow>
            </FieldColumn>
            <Notice>
              <NoticeIcon>
                <Line size={20} w={2.2} d="M10 1.200a8.800 8.800 0 1 0 .1 0M10 9v6M10 5v2.200" />
              </NoticeIcon>
              <NoticeText>
                이 IAM 사용자를 생성한 후 액세스 키 또는 AWS CodeCommit이나 Amazon Keyspaces에 대한 서비스별 보안 인증 정보를 통해 프로그래밍 방식 액세스를 생성할 수 있습니다.{" "}
                <NoticeLink href="#">자세히 알아보기<External /></NoticeLink>
              </NoticeText>
            </Notice>
          </Panel>
          <Actions>
            <Action>취소</Action>
            <Action $primary>다음</Action>
          </Actions>
        </div>
      </Main>

      <Footer>
        <FooterButton><Line d={shellD} size={18} w={2.2} />CloudShell</FooterButton>
        <button>의견</button>
        <Copyright>© 2024, Amazon Web Services, Inc. 또는 계열사.</Copyright>
        <FooterLink href="#">개인 정보 보호</FooterLink>
        <FooterLink href="#">약관</FooterLink>
        <FooterLink href="#">쿠키 기본 설정</FooterLink>
      </Footer>
    </Page>
  );
}
